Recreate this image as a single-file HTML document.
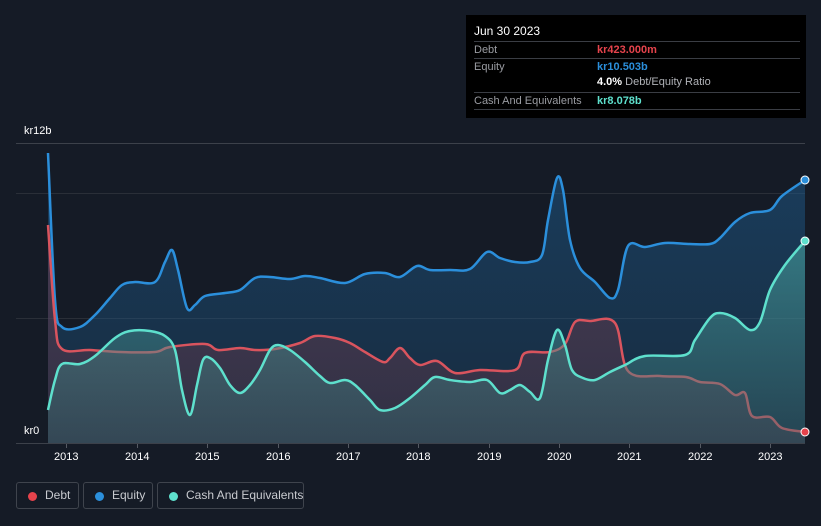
<!DOCTYPE html>
<html><head><meta charset="utf-8"><style>
html,body{margin:0;width:821px;height:526px;overflow:hidden}
body{background:#151b26;font-family:"Liberation Sans",sans-serif;position:relative}
.tt{position:absolute;left:466px;top:15px;width:340px;height:103px;background:#000;color:#fff;font-size:11px}
.row{position:absolute;left:8px;width:326px;border-top:1px solid #3a3d44;height:17px;line-height:17px}
.lbl{color:#9a9ca2;position:absolute;left:0}
.val{position:absolute;left:123px;font-weight:bold}
.ax{position:absolute;color:#fff;font-size:11px}
.leg{position:absolute;top:482px;height:27px;border:1px solid #3f444d;border-radius:3px;color:#c8cacf;font-size:12px;line-height:25px;box-sizing:border-box;white-space:nowrap}
.leg i{position:absolute;left:11px;top:9px;width:9px;height:9px;border-radius:50%}
</style></head><body>
<svg width="821" height="526" style="position:absolute;left:0;top:0">
<defs>
<linearGradient id="gb" x1="0" y1="0" x2="0" y2="1"><stop offset="0" stop-color="#1e5a8a" stop-opacity=".55"/><stop offset="1" stop-color="#1e5a8a" stop-opacity=".25"/></linearGradient>
<linearGradient id="gr" x1="0" y1="0" x2="0" y2="1"><stop offset="0" stop-color="#7a3b4c" stop-opacity=".5"/><stop offset="1" stop-color="#6a3b4c" stop-opacity=".3"/></linearGradient>
<linearGradient id="gc" x1="0" y1="0" x2="0" y2="1"><stop offset="0" stop-color="#4fb8b0" stop-opacity=".5"/><stop offset="1" stop-color="#3a6a70" stop-opacity=".4"/></linearGradient>
</defs>
<line x1="16" x2="805" y1="143.5" y2="143.5" stroke="#3c414a"/>
<line x1="16" x2="805" y1="193.5" y2="193.5" stroke="#2a2f38"/>
<line x1="16" x2="805" y1="318.5" y2="318.5" stroke="#2a2f38"/>
<g id="g"></g>
<line x1="16" x2="805" y1="443.5" y2="443.5" stroke="#3c414a"/>
<g stroke="#555a63">
<line x1="66.5" x2="66.5" y1="444" y2="448"/><line x1="137.5" x2="137.5" y1="444" y2="448"/><line x1="207.5" x2="207.5" y1="444" y2="448"/><line x1="278.5" x2="278.5" y1="444" y2="448"/><line x1="348.5" x2="348.5" y1="444" y2="448"/><line x1="418.5" x2="418.5" y1="444" y2="448"/><line x1="489.5" x2="489.5" y1="444" y2="448"/><line x1="559.5" x2="559.5" y1="444" y2="448"/><line x1="629.5" x2="629.5" y1="444" y2="448"/><line x1="700.5" x2="700.5" y1="444" y2="448"/><line x1="770.5" x2="770.5" y1="444" y2="448"/>
</g>
</svg>
<div class="ax" style="left:24px;top:125px">kr12b</div>
<div class="ax" style="left:24px;top:425px">kr0</div>
<div class="ax" style="left:54px;top:451px">2013</div><div class="ax" style="left:125px;top:451px">2014</div><div class="ax" style="left:195px;top:451px">2015</div><div class="ax" style="left:266px;top:451px">2016</div><div class="ax" style="left:336px;top:451px">2017</div><div class="ax" style="left:406px;top:451px">2018</div><div class="ax" style="left:477px;top:451px">2019</div><div class="ax" style="left:547px;top:451px">2020</div><div class="ax" style="left:617px;top:451px">2021</div><div class="ax" style="left:688px;top:451px">2022</div><div class="ax" style="left:758px;top:451px">2023</div>
<div class="tt">
<div style="position:absolute;left:8px;top:9px;font-size:12px">Jun 30 2023</div>
<div class="row" style="top:26px"><span class="lbl">Debt</span><span class="val" style="color:#e6434c">kr423.000m</span></div>
<div class="row" style="top:43px"><span class="lbl">Equity</span><span class="val" style="color:#2b8fdb">kr10.503b</span></div>
<div style="position:absolute;left:131px;top:61px"><b>4.0%</b> <span style="color:#b0b2b7">Debt/Equity Ratio</span></div>
<div class="row" style="top:77px"><span class="lbl">Cash And Equivalents</span><span class="val" style="color:#5ee0cd">kr8.078b</span></div>
<div class="row" style="top:94px;height:0"></div>
</div>
<div class="leg" style="left:16px;width:63px"><i style="background:#e6434c"></i><span style="position:absolute;left:28px">Debt</span></div>
<div class="leg" style="left:83px;width:70px"><i style="background:#2b8fdb"></i><span style="position:absolute;left:28px">Equity</span></div>
<div class="leg" style="left:157px;width:147px"><i style="background:#5ee0cd"></i><span style="position:absolute;left:28px">Cash And Equivalents</span></div>
<script>
function sm(p){let d="M"+p[0][0]+","+p[0][1];for(let i=0;i<p.length-1;i++){const a=p[Math.max(0,i-1)],b=p[i],c=p[i+1],e=p[Math.min(p.length-1,i+2)];const c1=[b[0]+(c[0]-a[0])/6,b[1]+(c[1]-a[1])/6],c2=[c[0]-(e[0]-b[0])/6,c[1]-(e[1]-b[1])/6];d+=" C"+c1+" "+c2+" "+c;}return d;}
const E=[[48,153],[55,300],[62,327],[80,327],[95,315],[110,298],[122,285],[135,282],[155,282],[165,262],[172,250],[178,270],[187,308],[195,305],[205,296],[225,293],[240,290],[255,278],[270,277],[290,279],[305,276],[320,278],[345,283],[365,274],[385,273],[400,277],[417,266],[430,270],[450,270],[470,269],[487,252],[500,258],[515,262],[530,262],[542,255],[548,220],[557,178],[563,190],[570,240],[580,268],[595,282],[610,298],[618,290],[628,246],[645,247],[665,243],[690,244],[710,244],[720,238],[735,222],[750,213],[770,210],[782,196],[805,180]];
const D=[[48,225],[55,320],[62,349],[90,350],[120,352],[155,352],[170,347],[205,344],[218,350],[240,348],[255,350],[275,349],[300,343],[315,336],[335,338],[350,343],[365,352],[383,362],[390,358],[400,348],[410,358],[420,365],[437,361],[455,373],[480,370],[515,370],[525,353],[550,352],[565,344],[575,322],[590,321],[615,323],[628,371],[660,376],[686,377],[700,382],[720,384],[735,395],[745,393],[752,416],[770,417],[782,428],[805,432]];
const C=[[48,410],[55,380],[62,364],[80,364],[95,356],[115,338],[130,331],[150,331],[165,336],[175,350],[182,390],[190,415],[197,385],[203,360],[210,358],[220,368],[230,385],[240,393],[250,385],[260,370],[270,350],[278,345],[290,350],[305,362],[320,376],[330,383],[345,380],[355,385],[370,400],[380,410],[395,408],[410,398],[425,385],[435,377],[450,380],[470,382],[487,380],[500,393],[510,390],[520,385],[530,392],[540,398],[548,360],[557,330],[565,345],[572,370],[583,378],[595,380],[610,372],[625,365],[645,356],[685,355],[695,340],[710,318],[720,313],[735,318],[750,330],[760,322],[770,290],[785,265],[805,241]];
let h="";
[[E,"url(#gb)","#2b8fdb"],[D,"url(#gr)","#d9545e"],[C,"url(#gc)","#5ee0cd"]].forEach(([p,f,s])=>{const d=sm(p);h+=`<path d="${d} L805,443 L48,443Z" fill="${f}"/><path d="${d}" fill="none" stroke="${s}" stroke-width="2.5"/>`;});
h+='<circle cx="805" cy="180" r="4" fill="#2b8fdb" stroke="#fff" stroke-width="1"/><circle cx="805" cy="241" r="4" fill="#5ee0cd" stroke="#fff" stroke-width="1"/><circle cx="805" cy="432" r="4" fill="#e6434c" stroke="#fff" stroke-width="1"/>';
document.getElementById("g").innerHTML=h;
</script>
</body></html>
